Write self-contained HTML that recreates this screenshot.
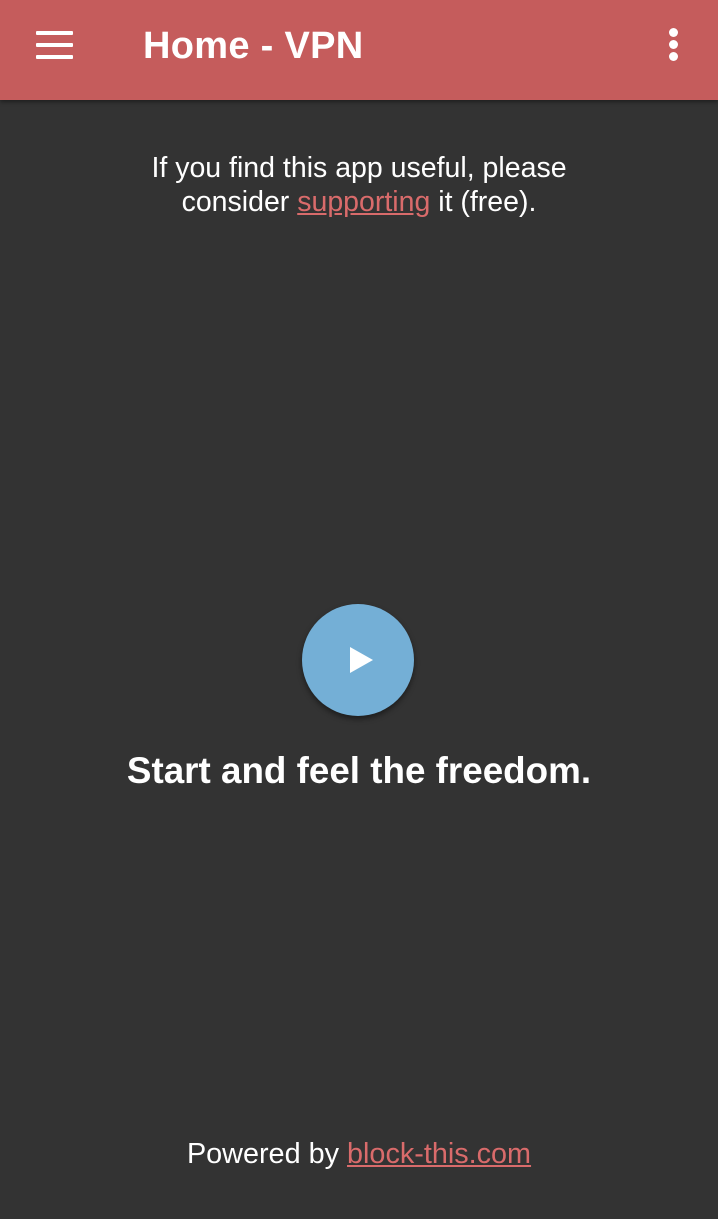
<!DOCTYPE html>
<html><head><style>
body{margin:0;width:718px;height:1219px;background:#333333;font-family:"Liberation Sans",sans-serif;position:relative;overflow:hidden;color:#fff}
.hdr{position:absolute;left:0;top:0;width:718px;height:100px;background:#c55c5c;box-shadow:0 2px 4px rgba(0,0,0,.4)}
.bar{position:absolute;left:36px;width:37px;height:4px;background:#fff;border-radius:1px}
.dot{position:absolute;left:669px;width:9px;height:9px;border-radius:50%;background:#fff}
.title{position:absolute;left:143px;top:25px;font-size:38px;font-weight:bold;letter-spacing:0.3px}
.msg{position:absolute;left:0;width:718px;top:151px;text-align:center;font-size:28.5px;line-height:34px}
a{color:#d96b6b;text-decoration:underline}
.btn{position:absolute;left:302px;top:604px;width:112px;height:112px;border-radius:50%;background:#74afd6;box-shadow:0 3px 6px rgba(0,0,0,.45)}
.big{position:absolute;left:0;width:718px;top:750px;text-align:center;font-size:36.8px;font-weight:bold}
.foot{position:absolute;left:0;width:718px;top:1138px;text-align:center;font-size:28.8px}
</style></head><body>
<div class="hdr">
<div class="bar" style="top:31px"></div><div class="bar" style="top:43px"></div><div class="bar" style="top:55px"></div>
<div class="title">Home - VPN</div>
<div class="dot" style="top:28px"></div><div class="dot" style="top:40px"></div><div class="dot" style="top:52px"></div>
</div>
<div class="msg">If you find this app useful, please<br>consider <a>supporting</a> it (free).</div>
<div class="btn"><svg width="112" height="112" viewBox="0 0 112 112"><path d="M48 43 L71 56 L48 69 Z" fill="#fff"/></svg></div>
<div class="big">Start and feel the freedom.</div>
<div class="foot">Powered by <a>block-this.com</a></div>
</body></html>
